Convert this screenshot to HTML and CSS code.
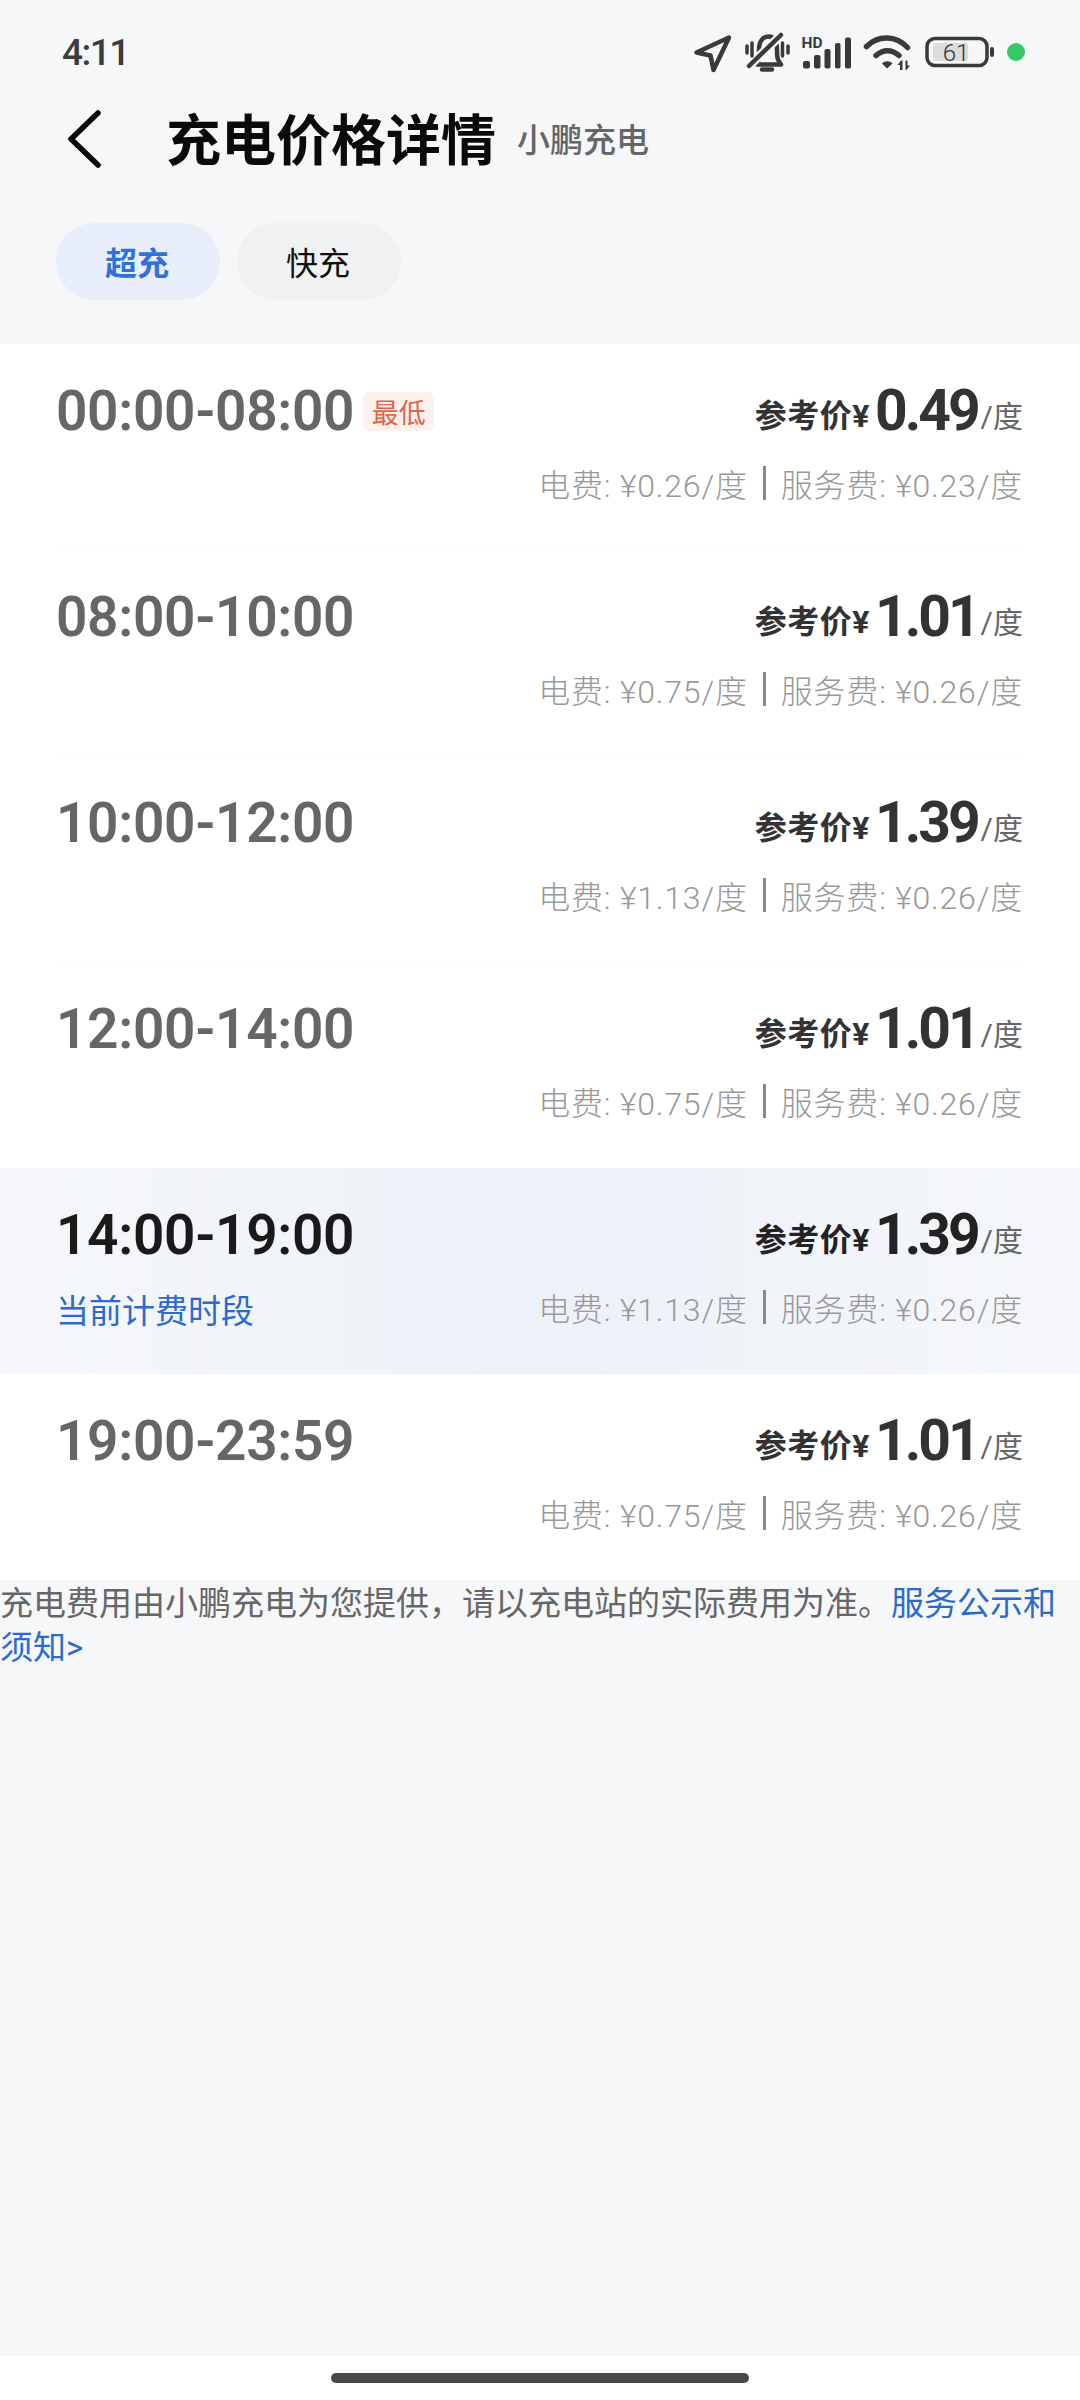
FILE: index.html
```html
<!DOCTYPE html>
<html lang="zh-CN">
<head>
    <meta charset="UTF-8">
    <meta name="viewport" content="width=device-width, initial-scale=1.0">
    <title>充电价格详情</title>
    <link rel="stylesheet" href="styles.css">
</head>
<body>
    <div class="status-bar">
        <span class="clock">4:11</span>
        <div class="status-icons">
            <svg width="38" height="46" viewBox="694 29 38 46"><path class="ic-line" d="M729 37.500L696.500 52.500L710.500 55.500L713.500 70Z"/></svg>
            <svg width="44" height="46" viewBox="744 29 44 46">
                <path class="ic-line" d="M757 64.500C759 60 759 55 759 50C759 41 763 36.500 769 36.500C775 36.500 777 42 777 50C777 56 777 60 781 64.500Z"/>
                <path class="ic-line" d="M762 69.500H772"/>
                <path class="ic-gap" d="M749 66L781 35"/>
                <path class="ic-slash" d="M749 66L781 35"/>
                <path class="ic-thin" d="M747 46V53M752 43V56M782.500 43V56M788 46V53"/>
            </svg>
            <svg width="52" height="46" viewBox="800 29 52 46">
                <text class="hd-text" x="801.500" y="48">HD</text>
                <rect class="ic-fill" x="803" y="61" width="7" height="7.500" rx="2"/>
                <rect class="ic-fill" x="814" y="55" width="6.500" height="13.500" rx="2"/>
                <rect class="ic-fill" x="824.500" y="49" width="6" height="19.500" rx="2"/>
                <rect class="ic-fill" x="835" y="43" width="5.500" height="25.500" rx="2"/>
                <rect class="ic-fill" x="845" y="37.500" width="6" height="31" rx="2"/>
            </svg>
            <svg width="49" height="46" viewBox="864 29 49 46">
                <path class="ic-wifi" d="M866.500 46.500C878 35 896 35 907.500 47.500"/>
                <path class="ic-wifi" d="M876 55.500C883 49 892 49 899 55.500"/>
                <path class="ic-fill" d="M882 63.500C885 60.500 889.500 60.500 892.500 63.500L887 68.500Z"/>
                <path class="ic-fill" d="M900 70V65H897.500L901 60.500H902.500V70ZM905.500 60.500H907.500V65.500H910L906.500 70H905.500Z"/>
            </svg>
            <svg width="70" height="46" viewBox="925 29 70 46">
                <rect class="batt-level" x="933" y="43" width="35" height="18" rx="3"/>
                <rect class="batt-shell" x="927" y="38.500" width="60" height="27" rx="8"/>
                <rect class="ic-fill" x="990" y="47" width="4" height="10" rx="2"/>
                <text class="batt-text" x="956" y="61">61</text>
            </svg>
            <span class="dot"></span>
        </div>
    </div>

    <header class="title-bar">
        <svg class="back" width="34" height="60" viewBox="0 0 34 60"><path d="M30 4L3 30L30 56"/></svg>
        <h1>充电价格详情</h1>
        <span class="brand">小鹏充电</span>
    </header>

    <div class="tabs">
        <div class="tab active">超充</div>
        <div class="tab">快充</div>
    </div>

    <div class="list">
        <div class="row">
            <div class="row-top">
                <div class="time">00:00-08:00<span class="tag">最低</span></div>
                <div class="price"><span class="price-label">参考价¥</span><span class="price-num">0.49</span><span class="unit">/度</span></div>
            </div>
            <div class="row-bottom">
                <span class="note"></span>
                <div class="fees">电费: ¥0.26/度<i class="sep"></i>服务费: ¥0.23/度</div>
            </div>
        </div>
        <div class="row">
            <div class="row-top">
                <div class="time">08:00-10:00</div>
                <div class="price"><span class="price-label">参考价¥</span><span class="price-num">1.01</span><span class="unit">/度</span></div>
            </div>
            <div class="row-bottom">
                <span class="note"></span>
                <div class="fees">电费: ¥0.75/度<i class="sep"></i>服务费: ¥0.26/度</div>
            </div>
        </div>
        <div class="row">
            <div class="row-top">
                <div class="time">10:00-12:00</div>
                <div class="price"><span class="price-label">参考价¥</span><span class="price-num">1.39</span><span class="unit">/度</span></div>
            </div>
            <div class="row-bottom">
                <span class="note"></span>
                <div class="fees">电费: ¥1.13/度<i class="sep"></i>服务费: ¥0.26/度</div>
            </div>
        </div>
        <div class="row no-line">
            <div class="row-top">
                <div class="time">12:00-14:00</div>
                <div class="price"><span class="price-label">参考价¥</span><span class="price-num">1.01</span><span class="unit">/度</span></div>
            </div>
            <div class="row-bottom">
                <span class="note"></span>
                <div class="fees">电费: ¥0.75/度<i class="sep"></i>服务费: ¥0.26/度</div>
            </div>
        </div>
        <div class="row current">
            <div class="row-top">
                <div class="time">14:00-19:00</div>
                <div class="price"><span class="price-label">参考价¥</span><span class="price-num">1.39</span><span class="unit">/度</span></div>
            </div>
            <div class="row-bottom">
                <span class="note">当前计费时段</span>
                <div class="fees">电费: ¥1.13/度<i class="sep"></i>服务费: ¥0.26/度</div>
            </div>
        </div>
        <div class="row no-line">
            <div class="row-top">
                <div class="time">19:00-23:59</div>
                <div class="price"><span class="price-label">参考价¥</span><span class="price-num">1.01</span><span class="unit">/度</span></div>
            </div>
            <div class="row-bottom">
                <span class="note"></span>
                <div class="fees">电费: ¥0.75/度<i class="sep"></i>服务费: ¥0.26/度</div>
            </div>
        </div>
    </div>

    <p class="notice">充电费用由小鹏充电为您提供，请以充电站的实际费用为准。<a href="#">服务公示和</a><a href="#">须知&gt;</a></p>

    <div class="home-area"><div class="home-bar"></div></div>
</body>
</html>
```

FILE: styles.css
```css
* {
    box-sizing: border-box;
}
body {
    margin: 0;
    width: 1080px;
    height: 2400px;
    display: flex;
    flex-direction: column;
    background-color: #f5f7f9;
    font-family: Roboto, "Noto Sans CJK SC", sans-serif;
    overflow: hidden;
}

/* status bar */
.status-bar {
    height: 104px;
    padding: 0 55px 0 62px;
    display: flex;
    align-items: center;
    justify-content: space-between;
}
.clock {
    font-size: 37px;
    font-weight: 500;
    letter-spacing: -1.500px;
    color: #3c3c3c;
}
.status-icons {
    display: flex;
    align-items: center;
    gap: 12px;
}
.status-icons svg {
    overflow: visible;
}
.ic-line {
    fill: none;
    stroke: #3a3a3a;
    stroke-width: 4.500;
    stroke-linejoin: round;
    stroke-linecap: round;
}
.ic-thin {
    fill: none;
    stroke: #3a3a3a;
    stroke-width: 3.500;
    stroke-linecap: round;
}
.ic-slash {
    fill: none;
    stroke: #3a3a3a;
    stroke-width: 4.500;
    stroke-linecap: round;
}
.ic-gap {
    fill: none;
    stroke: #f5f7f9;
    stroke-width: 9;
}
.ic-fill {
    fill: #3a3a3a;
}
.ic-wifi {
    fill: none;
    stroke: #3a3a3a;
    stroke-width: 5.500;
    stroke-linecap: round;
}
.hd-text {
    font-size: 15.500px;
    font-weight: 700;
    fill: #3a3a3a;
}
.batt-shell {
    fill: none;
    stroke: #3a3a3a;
    stroke-width: 3.500;
}
.batt-level {
    fill: #dcdcdc;
}
.batt-text {
    font-size: 24px;
    font-weight: 300;
    text-anchor: middle;
    fill: #333;
}
.dot {
    width: 18px;
    height: 18px;
    border-radius: 50%;
    background-color: #35c766;
}

/* title */
.title-bar {
    height: 70px;
    padding-left: 68px;
    display: flex;
    align-items: center;
}
.back {
    flex: none;
    fill: none;
    stroke: #0a0a0a;
    stroke-width: 5.500;
    stroke-linecap: round;
    stroke-linejoin: round;
}
.title-bar h1 {
    margin: 0 0 0 64px;
    padding-bottom: 6px;
    font-size: 55px;
    font-weight: 700;
    color: #0a0a0a;
}
.brand {
    margin-left: 21px;
    padding-bottom: 3px;
    font-size: 33px;
    font-weight: 500;
    color: #666;
}

/* tabs */
.tabs {
    margin: 49px 0 44px 56px;
    display: flex;
    gap: 17px;
}
.tab {
    width: 164px;
    height: 77px;
    padding: 0 2px 2px 0;
    border-radius: 39px;
    display: flex;
    align-items: center;
    justify-content: center;
    font-size: 32px;
    color: #111;
    background-color: #f0f1f3;
}
.tab.active {
    font-weight: 700;
    color: #2f72dc;
    background-color: #e8eefa;
}

/* price rows */
.list {
    background-color: #fff;
}
.row {
    height: 206px;
    padding: 33px 57px 0 56px;
    background-image: linear-gradient(#fafafa, #fafafa);
    background-size: 964px 1px;
    background-position: 56px bottom;
    background-repeat: no-repeat;
}
.row.no-line {
    background-image: none;
}
.row.current {
    background-image: linear-gradient(90deg, #f5f7fa, #edf1f8 50%, #f5f7fa);
    background-size: auto;
    background-position: 0 0;
}
.row-top {
    height: 70px;
    display: flex;
    align-items: baseline;
    justify-content: space-between;
}
.row-bottom {
    height: 72px;
    display: flex;
    align-items: center;
    justify-content: space-between;
}
.time {
    font-size: 55px;
    font-weight: 600;
    letter-spacing: -0.300px;
    color: #666;
    display: flex;
    align-items: center;
}
.current .time {
    color: #1a1a1a;
}
.tag {
    margin-left: 9px;
    width: 71px;
    height: 39px;
    border-radius: 6px;
    display: flex;
    align-items: center;
    justify-content: center;
    font-size: 27px;
    font-weight: 400;
    letter-spacing: 0;
    color: #e0654a;
    background-color: #fdf0ed;
}
.price {
    color: #333;
}
.current .price {
    color: #222;
}
.price-label {
    position: relative;
    top: -3px;
    font-size: 32px;
    font-weight: 700;
    letter-spacing: 0.500px;
}
.price-num {
    margin: 0 3px 0 5px;
    font-size: 57px;
    font-weight: 700;
    letter-spacing: -3px;
}
.unit {
    position: relative;
    top: -3px;
    font-size: 30px;
    color: #666;
}
.fees {
    display: flex;
    align-items: center;
    font-size: 32px;
    font-weight: 300;
    letter-spacing: 0.800px;
    color: #999;
}
.sep {
    width: 3px;
    height: 34px;
    margin: 0 15px;
    background-color: #888;
}
.note {
    padding-top: 4px;
    font-size: 33px;
    color: #2a6bd0;
}

/* footer */
.notice {
    flex: 1;
    margin: 0;
    padding-top: 2px;
    font-size: 33px;
    line-height: 44px;
    color: #666;
}
.notice a {
    color: #2a6bd0;
    text-decoration: none;
}
.home-area {
    height: 44px;
    padding-top: 17px;
    background-color: #fff;
}
.home-bar {
    width: 418px;
    height: 10px;
    margin: 0 auto;
    border-radius: 5px;
    background-color: #484848;
}
```
